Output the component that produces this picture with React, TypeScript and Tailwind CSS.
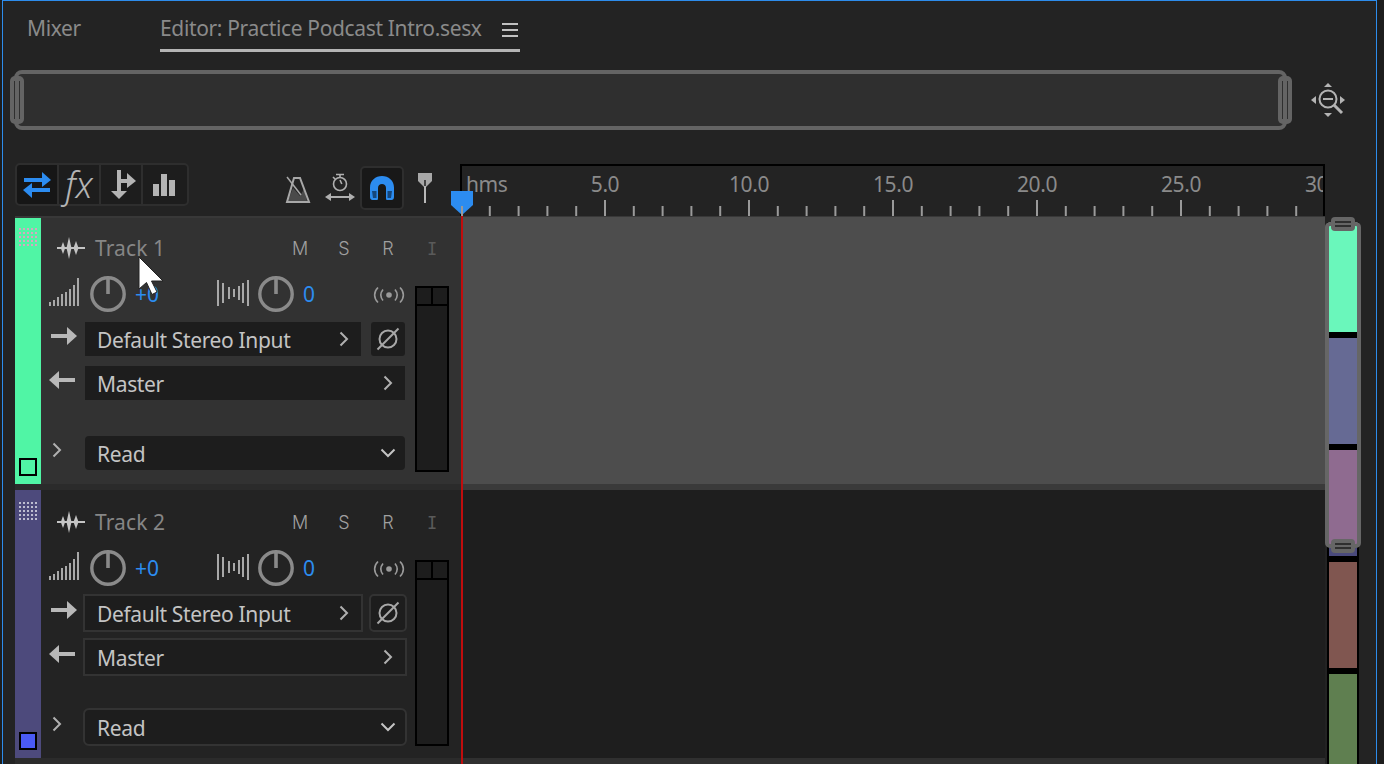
import React from "react";

const Wave = () => (
  <svg width="28" height="24" viewBox="0 0 28 24" className="shrink-0" fill="#c4c4c4">
    <rect x="0" y="11" width="28" height="2" />
    <polygon points="6,6 8.200,12 6,18 3.800,12" />
    <polygon points="12,1 14.500,12 12,23 9.500,12" />
    <polygon points="19,5 21.500,12 19,19 16.500,12" />
  </svg>
);

const VolIcon = () => (
  <svg width="30" height="28" viewBox="0 0 30 28" className="shrink-0" fill="#a8a8a8">
    {[4, 6, 9, 12, 14, 17, 21, 28].map((h, i) => (
      <rect key={i} x={i * 4} y={28 - h} width="2" height={h} />
    ))}
  </svg>
);

const PanIcon = () => (
  <svg width="32" height="26" viewBox="0 0 32 26" className="shrink-0" fill="#a8a8a8">
    <rect x="0" y="0" width="2" height="26" />
    <rect x="5" y="3" width="2" height="20" />
    <rect x="11" y="7" width="2" height="12" />
    <rect x="16" y="9" width="2" height="8" />
    <rect x="21" y="6" width="2" height="14" />
    <rect x="25" y="3" width="2" height="20" />
    <rect x="30" y="0" width="2" height="26" />
  </svg>
);

const Knob = () => (
  <svg width="36" height="36" viewBox="0 0 36 36" className="shrink-0">
    <circle cx="18" cy="18" r="16.2" fill="none" stroke="#8a8a8a" strokeWidth="3.4" />
    <rect x="16.2" y="1" width="3.6" height="17" fill="#8a8a8a" />
  </svg>
);

const Radio = () => (
  <svg width="32" height="18" viewBox="0 0 32 18" fill="none" stroke="#9a9a9a" strokeWidth="1.6" className="shrink-0 mt-[2px]">
    <path d="M5 1.5C0.5 6 0.5 12 5 16.5" />
    <path d="M10 3.5C7.2 7 7.2 11 10 14.500" />
    <circle cx="16" cy="9" r="2.800" fill="#9a9a9a" stroke="none" />
    <path d="M22 3.500C24.800 7 24.800 11 22 14.500" />
    <path d="M27 1.500C31.500 6 31.500 12 27 16.500" />
  </svg>
);

const ArrowRight = () => (
  <svg width="26" height="18" viewBox="0 0 26 18" fill="#b8b8b8">
    <rect x="0" y="7" width="18" height="4" />
    <polygon points="16,0 26,9 16,18" />
  </svg>
);

const ArrowLeft = () => (
  <svg width="26" height="18" viewBox="0 0 26 18" fill="#b8b8b8">
    <rect x="8" y="7" width="18" height="4" />
    <polygon points="10,0 0,9 10,18" />
  </svg>
);

const ChevR = ({ c = "#b0b0b0" }: { c?: string }) => (
  <svg width="10" height="16" viewBox="0 0 10 16" fill="none" stroke={c} strokeWidth="2" className="shrink-0">
    <path d="M1.500 1.500L8 8L1.500 14.500" />
  </svg>
);

const ChevD = () => (
  <svg width="16" height="10" viewBox="0 0 16 10" fill="none" stroke="#c4c4c4" strokeWidth="2" className="shrink-0 mr-[-3px]">
    <path d="M1.500 1.500L8 8L14.500 1.500" />
  </svg>
);

const Phase = () => (
  <svg width="24" height="24" viewBox="0 0 24 24" fill="none" stroke="#a8a8a8" strokeWidth="2">
    <circle cx="12" cy="12" r="8.500" />
    <path d="M1.500 22.500L22.500 1.500" />
  </svg>
);

const Swap = () => (
  <svg width="30" height="30" viewBox="0 0 30 30" fill="#2c8cf0">
    <rect x="2" y="8" width="19" height="4" />
    <polygon points="20,2 29,10 20,17" />
    <rect x="9" y="18" width="19" height="4" />
    <polygon points="10,13 1,20 10,28" />
  </svg>
);

const Branch = () => (
  <svg width="26" height="30" viewBox="0 0 26 30" fill="#b4b4b4" className="ml-[6px]">
    <rect x="6" y="0" width="4" height="24" />
    <rect x="8" y="9" width="10" height="4" />
    <polygon points="16,3 25,11 16,18" />
    <polygon points="0,21 16,21 8,29" />
  </svg>
);

const Bars = () => (
  <svg width="24" height="22" viewBox="0 0 24 22" fill="#b4b4b4" className="mr-[3px]">
    <rect x="1" y="10" width="6" height="12" />
    <rect x="9" y="0" width="6" height="22" />
    <rect x="17" y="6" width="6" height="16" />
  </svg>
);

const Metronome = () => (
  <svg width="26" height="28" viewBox="0 0 26 28">
    <polygon points="8,13 15,21 19,14 22,26 3,26" fill="#4a4a4a" />
    <polygon points="9,3 15,3 24,27 2,27" fill="none" stroke="#a8a8a8" strokeWidth="2" />
    <path d="M2 2L16 20" stroke="#a8a8a8" strokeWidth="1.500" />
  </svg>
);

const TimerArrow = () => (
  <svg width="30" height="30" viewBox="0 0 30 30" fill="none" stroke="#b0b0b0" strokeWidth="1.600">
    <circle cx="15" cy="11" r="6.500" />
    <path d="M11 1.500H19M15 1.500V4.500M15 7L16.800 11M8 4L10 6" />
    <rect x="4" y="23" width="22" height="2" fill="#b0b0b0" stroke="none" />
    <polygon points="0,24 6,20 6,28" fill="#b0b0b0" stroke="none" />
    <polygon points="30,24 24,20 24,28" fill="#b0b0b0" stroke="none" />
  </svg>
);

const Magnet = () => (
  <svg width="26" height="26" viewBox="0 0 26 26">
    <path d="M1 22C1 24 2 25 3.500 25H8C9 25 9 24 9 23V13C9 10.500 10.800 9 13 9C15.200 9 17 10.500 17 13V23C17 24 17 25 18 25H22.500C24 25 25 24 25 22V12.500C25 5.500 19.500 1 13 1C6.500 1 1 5.500 1 12.500Z" fill="#2c8cf0" />
    <polygon points="3,16 7.500,16 7.500,23 4,23" fill="#15477d" />
    <polygon points="18.500,16 23,16 22,23 18.500,23" fill="#15477d" />
  </svg>
);

const Pin = () => (
  <svg width="16" height="30" viewBox="0 0 16 30">
    <polygon points="1,0 15,0 15,8 8,15 1,8" fill="#a8a8a8" />
    <rect x="7" y="8" width="2" height="22" fill="#b8b8b8" />
    <rect x="7" y="7" width="2" height="6" fill="#444" />
  </svg>
);

const ZoomNav = () => (
  <svg width="34" height="34" viewBox="0 0 34 34" className="shrink-0">
    <circle cx="17" cy="16" r="8.500" fill="none" stroke="#b4b4b4" strokeWidth="2" />
    <rect x="12" y="15" width="10" height="2" fill="#b4b4b4" />
    <path d="M23 22L31 30" stroke="#b4b4b4" strokeWidth="3" />
    <polygon points="17,0 21,4 13,4" fill="#b4b4b4" />
    <polygon points="17,34 21,30 13,30" fill="#b4b4b4" />
    <polygon points="0,17 5,13 5,21" fill="#b4b4b4" />
    <polygon points="34,17 29,13 29,21" fill="#b4b4b4" />
  </svg>
);

const Cursor = () => (
  <svg width="26" height="40" viewBox="0 0 26 40" className="absolute left-[138px] top-[256px]">
    <path d="M1 1V33L8.500 26.500L14 38.500L19 36L13.500 25H25Z" fill="#ffffff" stroke="#222" strokeWidth="1" />
  </svg>
);

const Select = ({ text, w, outlined, icon }: { text: string; w: string; outlined: boolean; icon: React.ReactNode }) => (
  <div
    className={`${w} h-[34px] shrink-0 bg-[#1d1d1d] flex items-center justify-between pl-[12px] pr-[12px] text-[21px] tracking-[-0.35px] text-[#c4c4c4] ${
      outlined ? "outline-2 outline-[#333333]" : ""
    }`}
  >
    <span className="mt-[4px]">{text}</span>
    {icon}
  </div>
);

const Letter = ({ t, mono, c = "#a0a0a0" }: { t: string; mono?: boolean; c?: string }) => (
  <span
    className={`w-[44px] mt-[2px] text-center leading-none ${mono ? "font-['DejaVu_Sans_Mono'] text-[17px]" : "font-['Inter'] font-light text-[18px]"}`}
    style={{ color: c }}
  >
    {t}
  </span>
);

const TrackRow = ({
  name,
  strip,
  swatch,
  dots,
  hdr,
  band,
  lane,
  laneBand,
  outlined,
  first,
}: {
  name: string;
  strip: string;
  swatch: string;
  dots: string;
  hdr: string;
  band: string;
  lane: string;
  laneBand: string;
  outlined: boolean;
  first?: boolean;
}) => (
  <div className="flex h-[274px] shrink-0">
    <div className="relative w-[446px] shrink-0 flex flex-col" style={{ background: band }}>
      {first && <div className="absolute left-0 right-0 top-0 h-[2px] bg-[#383838]" />}
      <div className="flex h-[268px]" style={{ background: hdr }}>
        <div className="w-[26px] shrink-0 flex flex-col items-center justify-between pt-[12px] pb-[8px]" style={{ background: strip }}>
          <div className="grid grid-cols-5 gap-x-[2px] gap-y-[2px] w-[18px]">
            {Array.from({ length: 25 }).map((_, i) => (
              <div key={i} className="w-[2px] h-[2px]" style={{ background: dots }} />
            ))}
          </div>
          <div className="w-[18px] h-[18px] border-[2px] border-black" style={{ background: swatch }} />
        </div>
        <div className="flex-1 flex flex-col pl-[8px]">
          <div className="flex items-center h-[24px] mt-[20px]">
            <div className="ml-[8px]">
              <Wave />
            </div>
            <span className="ml-[10px] mt-[2px] text-[21px] tracking-[0.1px] text-[#868686] w-[183px]">{name}</span>
            <Letter t="M" />
            <Letter t="S" />
            <Letter t="R" />
            <Letter t="I" mono c="#5a5a5a" />
          </div>
          <div className="flex mt-[16px]">
            <div className="w-[356px] shrink-0 flex flex-col">
              <div className="flex items-center h-[36px]">
                <div className="mt-[-4px]"><VolIcon /></div>
                <div className="ml-[11px]"><Knob /></div>
                <span className="ml-[9px] mt-[2px] w-[82px] text-[21px] text-[#2c8cf0]">+0</span>
                <div className="mt-[-2px]"><PanIcon /></div>
                <div className="ml-[9px]"><Knob /></div>
                <span className="ml-[9px] mt-[2px] w-[70px] text-[21px] text-[#2c8cf0]">0</span>
                <Radio />
              </div>
              <div className="flex items-center mt-[10px]">
                <div className="w-[36px] shrink-0 pl-[2px] mt-[-6px]">
                  <ArrowRight />
                </div>
                <Select text="Default Stereo Input" w="w-[276px]" outlined={outlined} icon={<ChevR />} />
                <div
                  className={`ml-[10px] w-[34px] h-[34px] bg-[#1d1d1d] rounded-[3px] flex items-center justify-center ${
                    outlined ? "outline-2 outline-[#333333]" : ""
                  }`}
                >
                  <Phase />
                </div>
              </div>
              <div className="flex items-center mt-[10px]">
                <div className="w-[36px] shrink-0 mt-[-6px]">
                  <ArrowLeft />
                </div>
                <Select text="Master" w="w-[320px]" outlined={outlined} icon={<ChevR />} />
              </div>
              <div className="flex items-center mt-[36px]">
                <div className="w-[36px] shrink-0 pl-[3px] mt-[-6px]">
                  <ChevR />
                </div>
                <Select text="Read" w="w-[320px] rounded-[4px]" outlined={outlined} icon={<ChevD />} />
              </div>
            </div>
            <div className="ml-[10px] mt-[10px] w-[34px] h-[186px] border-[2px] border-black bg-[#1d1d1d] flex flex-col">
              <div className="h-[18px] border-b-[2px] border-black flex">
                <div className="flex-1 border-r-[2px] border-black" />
                <div className="flex-1" />
              </div>
            </div>
          </div>
        </div>
      </div>
    </div>
    <div className="w-[864px] shrink-0 flex flex-col border-l-[2px] border-[#c00d0d]">
      <div className={`h-[268px] ${first ? "border-t-[1px] border-[#383838]" : ""}`} style={{ background: lane }} />
      <div className="flex-1" style={{ background: laneBand }} />
    </div>
  </div>
);

const Ruler = () => {
  const ticks = Array.from({ length: 30 }).map((_, i) => i * 28.8);
  const labels: [string, number][] = [["5.0", 143], ["10.0", 287], ["15.0", 431], ["20.0", 575], ["25.0", 719]];
  return (
    <div className="relative w-[865px] h-[52px] border-t-[2px] border-l-[2px] border-r-[2px] border-black bg-[#232323] overflow-hidden text-[21px] tracking-[-0.4px] text-[#8a8a8a]">
      <span className="absolute left-[4px] top-[3px]">hms</span>
      {labels.map(([t, x]) => (
        <span key={t} className="absolute top-[3px] -translate-x-1/2" style={{ left: x }}>
          {t}
        </span>
      ))}
      <span className="absolute left-[843px] top-[3px]">30</span>
      <svg width="861" height="16" viewBox="0 0 861 16" className="absolute left-0 top-[34px]">
        {ticks.map((x, i) => {
          const major = i % 5 === 0;
          return <rect key={i} x={x - 2} y={major ? 0 : 6} width="2" height={major ? 16 : 10} fill="#9a9a9a" />;
        })}
      </svg>
    </div>
  );
};

export default function App() {
  return (
    <div className="relative w-[1384px] h-[764px] overflow-hidden bg-[#1d1d1d] font-['Noto_Sans',sans-serif]">
      <div className="ml-[2px] w-[1375px] h-[764px] border-t-[1px] border-l-[1px] border-r-[1px] border-[#2d8ceb] bg-[#232323] flex flex-col">
        <div className="flex h-[51px] shrink-0 pl-[24px] text-[21px] tracking-[-0.35px] text-[#8a8a8a]">
          <span className="w-[133px] pt-[12px]">Mixer</span>
          <div className="w-[360px] h-[51px] border-b-[3px] border-[#b4b4b4] flex pt-[12px]">
            <span className="w-[342px] whitespace-nowrap">Editor: Practice Podcast Intro.sesx</span>
            <div className="flex flex-col gap-[4px] pt-[10px]">
              <div className="w-[16px] h-[2px] bg-[#c0c0c0]" />
              <div className="w-[16px] h-[2px] bg-[#c0c0c0]" />
              <div className="w-[16px] h-[2px] bg-[#c0c0c0]" />
            </div>
          </div>
        </div>

        <div className="flex items-center mt-[18px] ml-[11px] h-[60px] shrink-0">
          <div className="relative w-[1273px] h-[60px] rounded-[8px] border-[4px] border-[#646464] bg-[#2f2f2f]">
            <div className="absolute left-[-8px] top-[2px] w-[14px] h-[48px] rounded-[5px] bg-[#646464] flex justify-center items-center">
              <div className="w-[6px] h-[38px] border-x-[1px] border-[#2f2f2f]" />
            </div>
            <div className="absolute right-[-9px] top-[2px] w-[14px] h-[48px] rounded-[5px] bg-[#646464] flex justify-center items-center">
              <div className="w-[6px] h-[38px] border-x-[1px] border-[#2f2f2f]" />
            </div>
          </div>
          <div className="ml-[24px]">
            <ZoomNav />
          </div>
        </div>

        <div className="flex mt-[34px] ml-[12px] flex-1 min-h-0">
          <div className="w-[1310px] shrink-0 flex flex-col">
            <div className="flex h-[52px] shrink-0">
              <div className="w-[445px] shrink-0 flex items-start relative">
                <div className="flex h-[43px] w-[174px] mt-[-1px] rounded-[5px] border-[2px] border-[#2e2e2e] bg-[#1d1d1d]">
                  <div className="w-[42px] bg-[#161616] rounded-l-[4px] border-r-[2px] border-[#2e2e2e] flex items-center justify-center">
                    <Swap />
                  </div>
                  <div className="w-[42px] rounded-l-[4px] border-r-[2px] border-[#2e2e2e] flex items-center justify-center font-['Noto_Sans'] font-light italic text-[36px] leading-none text-[#b4b4b4]">
                    fx
                  </div>
                  <div className="w-[42px] rounded-l-[4px] border-r-[2px] border-[#2e2e2e] flex items-center justify-center">
                    <Branch />
                  </div>
                  <div className="flex-1 flex items-center justify-center">
                    <Bars />
                  </div>
                </div>
                <div className="ml-[96px] mt-[11px]">
                  <Metronome />
                </div>
                <div className="ml-[14px] mt-[9px]">
                  <TimerArrow />
                </div>
                <div className="ml-[5px] mt-[2px] w-[44px] h-[44px] rounded-[5px] border-[2px] border-[#2e2e2e] bg-[#181818] flex items-center justify-center">
                  <Magnet />
                </div>
                <div className="ml-[13px] mt-[9px]">
                  <Pin />
                </div>
              </div>
              <Ruler />
            </div>
            <TrackRow
              first
              name="Track 1"
              strip="#50f5a5"
              swatch="#50f5a5"
              dots="#d6a8c0"
              hdr="#323232"
              band="#2b2b2b"
              lane="#4d4d4d"
              laneBand="#3a3a3a"
              outlined={false}
            />
            <TrackRow
              name="Track 2"
              strip="#4d4a7c"
              swatch="#4a5af5"
              dots="#bdbdd0"
              hdr="#232323"
              band="#2b2b2b"
              lane="#1e1e1e"
              laneBand="#303030"
              outlined={true}
            />
          </div>

          <div className="relative flex-1 pt-[58px]">
            <div className="relative ml-[2px] w-[32px] h-full bg-black px-[2px] flex flex-col gap-[6px]">
              <div className="h-[110px] shrink-0 bg-[#6af7bb]" />
              <div className="h-[106px] shrink-0 bg-[#666a94]" />
              <div className="h-[106px] shrink-0 bg-[#8f6b90] relative">
                <div className="absolute left-0 right-0 bottom-0 h-[10px] bg-[#4a4a7c]" />
              </div>
              <div className="h-[106px] shrink-0 bg-[#805650]" />
              <div className="h-[106px] shrink-0 bg-[#5f7f50]" />
            </div>
            <div className="absolute left-[0px] top-[58px] w-[36px] h-[326px] rounded-[5px] border-[4px] border-[#666666]" />
            <div className="absolute left-[6px] top-[53px] w-[24px] h-[14px] rounded-[4px] bg-[#666666] flex flex-col justify-center gap-[2px] px-[4px]">
              <div className="h-[2px] bg-[#2f2f2f]" />
              <div className="h-[2px] bg-[#2f2f2f]" />
            </div>
            <div className="absolute left-[6px] top-[375px] w-[24px] h-[14px] rounded-[4px] bg-[#666666] flex flex-col justify-center gap-[2px] px-[4px]">
              <div className="h-[2px] bg-[#2f2f2f]" />
              <div className="h-[2px] bg-[#2f2f2f]" />
            </div>
          </div>
        </div>
      </div>

      <svg width="24" height="26" viewBox="0 0 24 26" className="absolute left-[450px] top-[190px]">
        <polygon points="1,1 23,1 23,15 12,25 1,15" fill="#2c8cf0" />
        <rect x="11" y="16" width="2" height="10" fill="#9a9a9a" />
      </svg>
      <Cursor />
    </div>
  );
}
